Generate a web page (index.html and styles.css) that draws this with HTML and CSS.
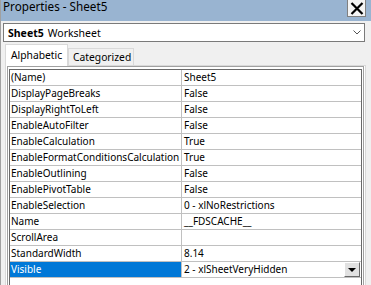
FILE: index.html
```html
<!DOCTYPE html>
<html lang="en">
<head>
    <meta charset="UTF-8" />
    <title>Properties - Sheet5</title>
    <link rel="stylesheet" href="styles.css">
</head>
<body>
    <div class="window">
        <div class="titlebar">
            <span class="title">Properties - Sheet5</span>
            <div class="close">
                <svg width="14" height="13" viewBox="0 0 14 13">
                    <path d="M1.5 1 L12.5 12 M12.5 1 L1.5 12" stroke="#000" stroke-width="2.2" fill="none"/>
                </svg>
            </div>
        </div>
        <div class="content">
            <div class="objsel">
                <span class="objname">Sheet5</span>
                <span class="objtype">Worksheet</span>
                <svg class="chev" width="8" height="5" viewBox="0 0 8 5">
                    <path d="M0.5 0.5 L4 4 L7.5 0.5" stroke="#555" stroke-width="1" fill="none"/>
                </svg>
            </div>
            <div class="tabs">
                <div class="tab active">Alphabetic</div>
                <div class="tab">Categorized</div>
            </div>
            <div class="page">
                <div class="grid-outer">
                    <div class="grid">
                        <div class="row"><div class="name">(Name)</div><div class="value">Sheet5</div></div>
                        <div class="row"><div class="name">DisplayPageBreaks</div><div class="value">False</div></div>
                        <div class="row"><div class="name">DisplayRightToLeft</div><div class="value">False</div></div>
                        <div class="row"><div class="name">EnableAutoFilter</div><div class="value">False</div></div>
                        <div class="row"><div class="name">EnableCalculation</div><div class="value">True</div></div>
                        <div class="row"><div class="name">EnableFormatConditionsCalculation</div><div class="value">True</div></div>
                        <div class="row"><div class="name">EnableOutlining</div><div class="value">False</div></div>
                        <div class="row"><div class="name">EnablePivotTable</div><div class="value">False</div></div>
                        <div class="row"><div class="name">EnableSelection</div><div class="value">0 - xlNoRestrictions</div></div>
                        <div class="row"><div class="name">Name</div><div class="value">__FDSCACHE__</div></div>
                        <div class="row"><div class="name">ScrollArea</div><div class="value"></div></div>
                        <div class="row"><div class="name">StandardWidth</div><div class="value">8.14</div></div>
                        <div class="row selected">
                            <div class="name">Visible</div>
                            <div class="value">
                                <span>2 - xlSheetVeryHidden</span>
                                <div class="dropbtn"><span class="arrow"></span></div>
                            </div>
                        </div>
                    </div>
                </div>
            </div>
        </div>
    </div>
</body>
</html>
```

FILE: styles.css
```css
* {
    margin: 0;
    padding: 0;
    box-sizing: border-box;
}

body {
    width: 371px;
    height: 285px;
    overflow: hidden;
    background: #f0f0f0;
    font-family: 'Noto Sans', 'Open Sans', sans-serif;
    font-size: 10px;
    color: #000;
}

.window {
    height: 285px;
    border-left: 1px solid #a0a0a0;
    display: flex;
    flex-direction: column;
}

.titlebar {
    height: 21px;
    background: #99b4d1;
    display: flex;
    align-items: flex-start;
    justify-content: space-between;
    padding-left: 2px;
    padding-right: 5px;
    flex: none;
}

.title {
    font-size: 11.7px;
    line-height: 13px;
}

.close {
    width: 19px;
    height: 17px;
    background: #f4f4f4;
    border: 1px solid #808080;
    border-top: none;
    display: flex;
    align-items: center;
    justify-content: center;
}

.content {
    flex: 1;
    display: flex;
    flex-direction: column;
    padding: 2px 6px 0 2px;
    min-height: 0;
}

.objsel {
    height: 19px;
    background: #fff;
    border: 1px solid #7a7a7a;
    display: flex;
    align-items: center;
    padding: 0 3px 0 4px;
    gap: 4px;
    font-size: 10.5px;
    flex: none;
}

.objname {
    font-weight: bold;
}

.chev {
    margin-left: auto;
}

.tabs {
    display: flex;
    align-items: flex-end;
    height: 21px;
    margin-top: 2px;
    padding-left: 2px;
    position: relative;
    z-index: 1;
    flex: none;
}

.tab {
    width: 66px;
    height: 17px;
    padding-left: 4px;
    border: 1px solid #d9d9d9;
    border-bottom: none;
    background: #f0f0f0;
    display: flex;
    align-items: center;
    font-size: 10.3px;
}

.tab.active {
    width: 63px;
    height: 22px;
    padding-left: 5px;
    padding-top: 3px;
    background: #fff;
    margin-bottom: -1px;
    align-items: flex-start;
}

.page {
    flex: 1;
    min-height: 0;
    border: 1px solid #d9d9d9;
    border-bottom: none;
    margin-left: 2px;
    margin-right: -1px;
    background: #fff;
    padding: 0 1px;
}

.grid-outer {
    height: 100%;
    border: 1px solid #a0a0a0;
    border-bottom: none;
    background: #fff;
    padding: 2px 1px 0 1px;
}

.grid {
    height: 100%;
    border-top: 1px solid #696969;
    border-left: 1px solid #696969;
    border-right: 1px solid #696969;
}

.row {
    display: flex;
    height: 16px;
    border-bottom: 1px solid #c0c0c0;
}

.name {
    width: 172px;
    flex: none;
    padding-left: 1px;
    border-right: 1px solid #c0c0c0;
    line-height: 15px;
    white-space: nowrap;
    overflow: hidden;
}

.value {
    flex: 1;
    padding-left: 2px;
    line-height: 15px;
    display: flex;
    align-items: center;
    white-space: nowrap;
}

.row.selected .name {
    background: #0078d7;
    color: #fff;
}

.dropbtn {
    margin-left: auto;
    margin-right: 1px;
    width: 16px;
    height: 15px;
    background: #e1e1e1;
    border: 1px solid #fff;
    border-right-color: #696969;
    border-bottom-color: #696969;
    display: flex;
    align-items: center;
    justify-content: center;
}

.arrow {
    width: 0;
    height: 0;
    border-left: 4px solid transparent;
    border-right: 4px solid transparent;
    border-top: 4px solid #000;
}
```
